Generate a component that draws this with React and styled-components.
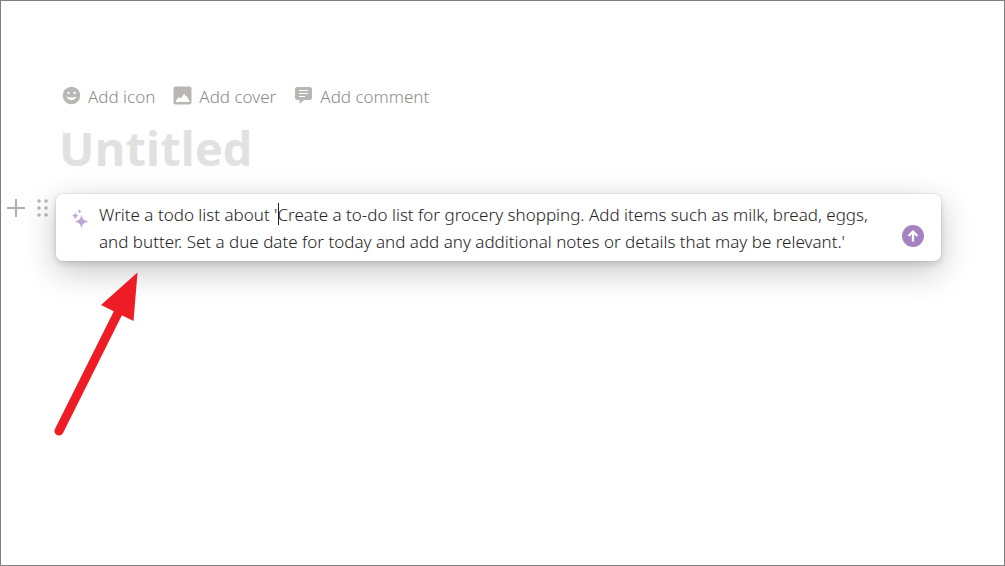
import React, { useState } from 'react';
import styled, { createGlobalStyle } from 'styled-components';

const GlobalStyle = createGlobalStyle`
  * {
    box-sizing: border-box;
  }

  body {
    margin: 0;
    background: #ffffff;
    font-family: "Noto Sans", "Open Sans", sans-serif;
  }

  button,
  input,
  textarea {
    margin: 0;
    padding: 0;
    border: 0;
    background: none;
    font-family: inherit;
  }
`;

const Page = styled.main`
  position: relative;
  min-height: 100vh;
  padding: 84px 63px 0 0;
  border: 1px solid #808080;
  overflow: hidden;
`;

const Header = styled.header`
  padding-left: 58px;
`;

const Actions = styled.div`
  display: flex;
  gap: 18px;
  padding-left: 3px;
`;

const ActionButton = styled.button`
  display: flex;
  align-items: center;
  gap: 7px;
  height: 24px;
  color: #8c8b88;
  font-size: 17px;
  font-weight: 300;
  line-height: 24px;
  cursor: pointer;

  svg {
    flex: none;
    margin-bottom: 3px;
    fill: #b8b7b4;
  }
`;

const Title = styled.input`
  display: block;
  width: 100%;
  height: 64px;
  margin-top: 7px;
  color: #37352f;
  font-family: "Open Sans", sans-serif;
  font-size: 47px;
  font-weight: 700;
  outline: none;

  &::placeholder {
    color: #e1e1df;
    opacity: 1;
  }
`;

const Block = styled.div`
  display: flex;
  align-items: flex-start;
  margin-top: 14px;
`;

const Gutter = styled.div`
  display: flex;
  flex: none;
  justify-content: space-between;
  width: 55px;
  padding: 4px 7px 0 5px;
`;

const GutterButton = styled.button`
  display: flex;
  align-items: center;
  justify-content: center;
  width: ${props => props.$width};
  height: 20px;
  cursor: pointer;
`;

const Prompt = styled.form`
  display: flex;
  flex: 1;
  min-width: 0;
  padding: 7px 16px 6px;
  border-radius: 7px;
  background: #ffffff;
  box-shadow:
    0 0 0 1px rgba(15, 15, 15, 0.05),
    0 3px 6px rgba(15, 15, 15, 0.12),
    0 10px 32px rgba(15, 15, 15, 0.24);
`;

const Sparkle = styled.svg`
  flex: none;
  width: 17px;
  height: 20px;
  margin: 8px 10px 0 0;
  fill: #bda4d6;
`;

const Field = styled.div`
  position: relative;
  flex: 1;
  min-width: 0;
`;

const PromptText = styled.textarea`
  display: block;
  width: 100%;
  height: 54px;
  color: #24221d;
  font-size: 17px;
  font-weight: 300;
  line-height: 27px;
  resize: none;
  outline: none;
  overflow: hidden;
  caret-color: transparent;
`;

const Caret = styled.span`
  position: absolute;
  top: 2px;
  left: 179px;
  width: 1px;
  height: 22px;
  background: #1f1e1b;
`;

const SendButton = styled.button`
  display: flex;
  flex: none;
  align-items: center;
  justify-content: center;
  align-self: flex-end;
  width: 22px;
  height: 22px;
  margin: 0 1px 8px 16px;
  border-radius: 50%;
  background: #a782c3;
  cursor: pointer;
`;

const Pointer = styled.svg`
  position: absolute;
  top: 270px;
  left: 52px;
  pointer-events: none;
`;

const SmileIcon = () => (
  <svg width="19" height="19" viewBox="0 0 19 19" aria-hidden="true">
    <circle cx="9.5" cy="9.5" r="8.8" />
    <circle cx="6.5" cy="7" r="1.2" fill="#fff" />
    <circle cx="12.5" cy="7" r="1.2" fill="#fff" />
    <path d="M4.600 10.600c.8 2.300 2.600 3.600 4.900 3.600s4.100-1.300 4.900-3.600c-1.500.7-3.200 1-4.900 1s-3.400-.3-4.900-1z" fill="#fff" />
  </svg>
);

const ImageIcon = () => (
  <svg width="19" height="19" viewBox="0 0 19 19" aria-hidden="true">
    <rect x=".5" y=".5" width="18" height="18" rx="2" />
    <path d="M3 16v-1.500l3-3.500 1.800 1.500L11.200 7.500l1.600 3 .8-.5 2.600 4.500V16z" fill="#fff" />
  </svg>
);

const CommentIcon = () => (
  <svg width="19" height="19" viewBox="0 0 19 19" aria-hidden="true">
    <path d="M3.500 1h12a2.500 2.500 0 0 1 2.500 2.500v8a2.500 2.500 0 0 1-2.500 2.500H10l-4.500 4v-4h-2A2.500 2.500 0 0 1 1 11.500v-8A2.500 2.500 0 0 1 3.500 1z" />
    <path d="M5 4.500h9M5 7.500h9M5 10.500h6" stroke="#fff" strokeWidth="1.200" />
  </svg>
);

const App = () => {
  const [title, setTitle] = useState('');
  const [prompt, setPrompt] = useState(
    "Write a todo list about 'Create a to-do list for grocery shopping. Add items such as milk, bread, eggs, and butter. Set a due date for today and add any additional notes or details that may be relevant.'"
  );

  return (
    <Page>
      <GlobalStyle />
      <Header>
        <Actions>
          <ActionButton type="button"><SmileIcon /> Add icon</ActionButton>
          <ActionButton type="button"><ImageIcon /> Add cover</ActionButton>
          <ActionButton type="button"><CommentIcon /> Add comment</ActionButton>
        </Actions>
        <Title
          aria-label="Page title"
          placeholder="Untitled"
          value={title}
          onChange={(e) => setTitle(e.target.value)}
        />
      </Header>

      <Block>
        <Gutter>
          <GutterButton type="button" $width="20px" aria-label="Add block">
            <svg width="18" height="18" viewBox="0 0 18 18" aria-hidden="true">
              <path d="M9 0v18M0 9h18" stroke="#b0afac" strokeWidth="2" />
            </svg>
          </GutterButton>
          <GutterButton type="button" $width="12px" aria-label="Drag block">
            <svg width="12" height="18" viewBox="0 0 12 18" fill="#b8b7b4" aria-hidden="true">
              {[2, 9, 16].map(y => (
                <React.Fragment key={y}>
                  <circle cx="2" cy={y} r="1.800" />
                  <circle cx="9" cy={y} r="1.800" />
                </React.Fragment>
              ))}
            </svg>
          </GutterButton>
        </Gutter>

        <Prompt onSubmit={(e) => e.preventDefault()}>
          <Sparkle viewBox="0 0 17 20" aria-hidden="true">
            <path d="M9.500 5.500c.9 4.500 2 5.800 7 7-5 1.200-6.100 2.500-7 7-.9-4.500-2-5.800-6.800-7 4.800-1.200 5.900-2.500 6.800-7z" />
            <path d="M3.300 3c.5 2.400 1.200 3.100 3.500 3.700-2.300.6-3 1.300-3.500 3.700C2.800 8 2.100 7.300 0 6.700 2.100 6.100 2.800 5.400 3.300 3z" />
            <path d="M7.600 0c.4 1.400.8 1.900 2.200 2.200-1.400.3-1.800.8-2.200 2.200-.4-1.400-.8-1.900-2.200-2.200C6.800 1.900 7.200 1.400 7.600 0z" />
          </Sparkle>
          <Field>
            <PromptText
              aria-label="Ask AI"
              rows={2}
              spellCheck={false}
              value={prompt}
              onChange={(e) => setPrompt(e.target.value)}
            />
            <Caret />
          </Field>
          <SendButton type="submit" aria-label="Send">
            <svg width="12" height="14" viewBox="0 0 12 14" fill="none" stroke="#fff" strokeWidth="2.300" strokeLinejoin="round" aria-hidden="true">
              <path d="M6 12.500V2.500M1.500 7 6 2.500 10.500 7" />
            </svg>
          </SendButton>
        </Prompt>
      </Block>

      <Pointer width="90" height="170" viewBox="0 0 90 170" aria-hidden="true">
        <path d="M6 160 65 42" stroke="#ee1c25" strokeWidth="9" strokeLinecap="round" />
        <path d="M84.500 1.500 48 34 80.500 50z" fill="#ee1c25" />
      </Pointer>
    </Page>
  );
};

export default App;
